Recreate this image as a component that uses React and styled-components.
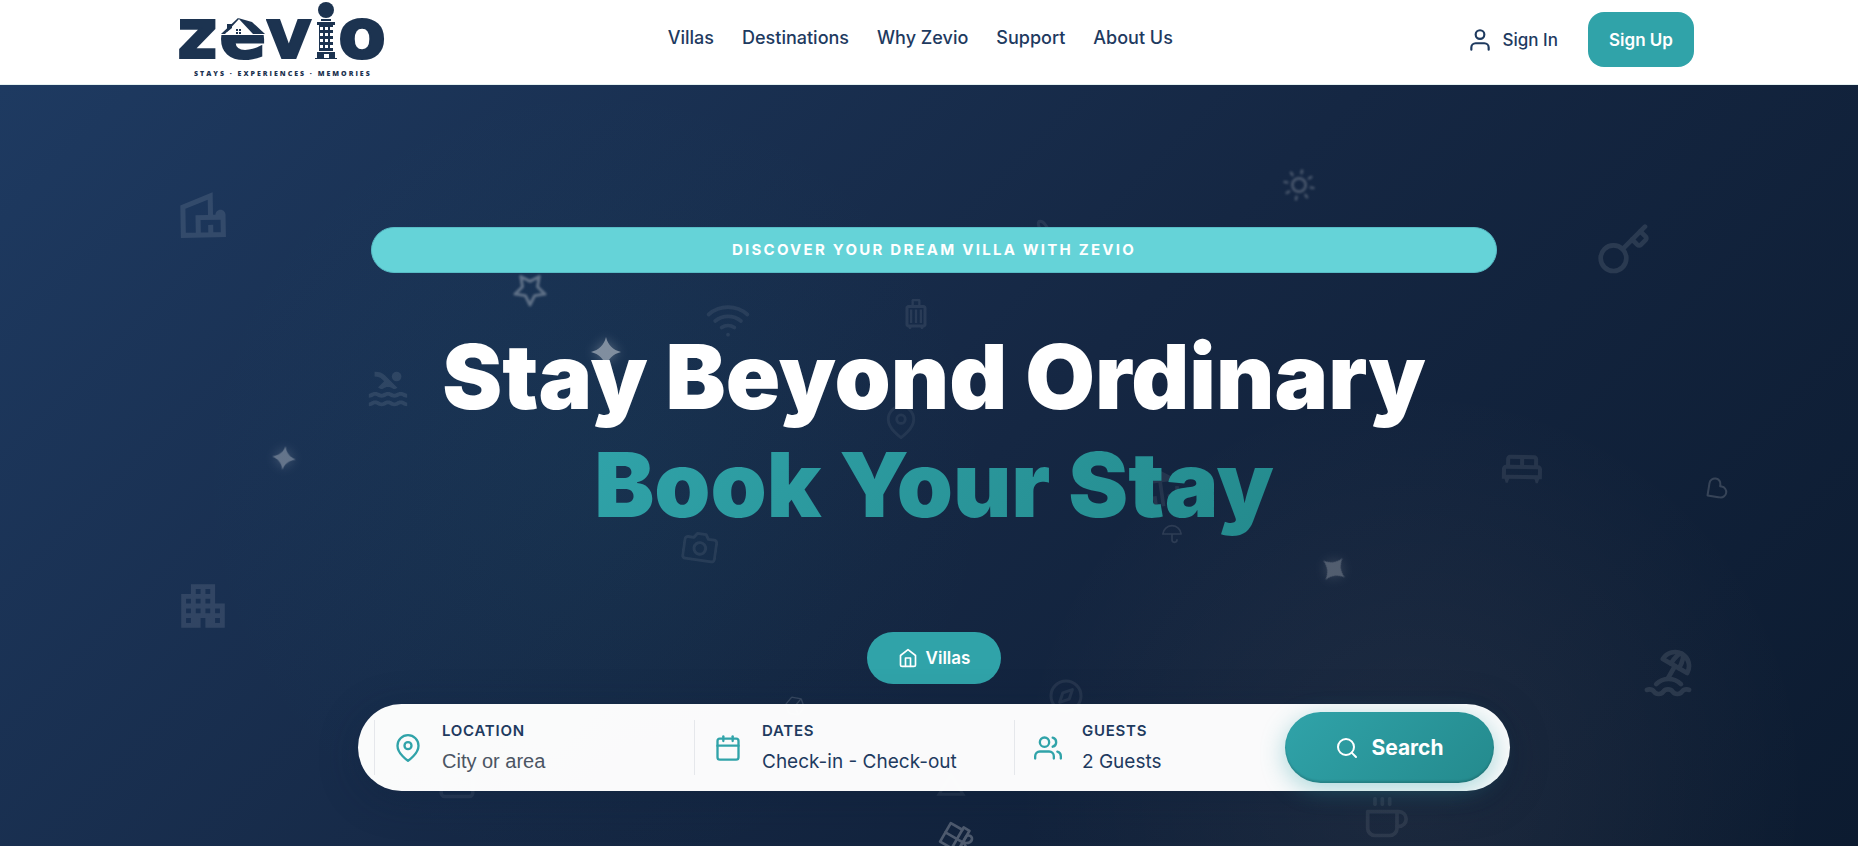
import styled, { createGlobalStyle } from "styled-components";
import {
  FiBox,
  FiCalendar,
  FiCamera,
  FiCoffee,
  FiCompass,
  FiGift,
  FiHeart,
  FiHome,
  FiMapPin,
  FiSearch,
  FiStar,
  FiSun,
  FiUmbrella,
  FiUser,
  FiUsers,
  FiWifi,
} from "react-icons/fi";
import {
  MdApartment,
  MdChangeHistory,
  MdDeck,
  MdOutlineKingBed,
  MdOutlineLuggage,
  MdOutlineVilla,
  MdPool,
} from "react-icons/md";
import { TbBeach } from "react-icons/tb";
import { Key, Plane } from "lucide-react";

const COLORS = {
  NAVY: "#1e3a5f",
  LOGO: "#1c3350",
  TEAL: "#30a3a9",
  TEAL_DARK: "#248a8d",
  AQUA: "#65d3d8",
  GREY: "#4b5563",
  WHITE: "#ffffff",
};

const GlobalStyle = createGlobalStyle`
  *, *::before, *::after {
    box-sizing: border-box;
  }
  body {
    margin: 0;
    font-family: Inter, "Liberation Sans", sans-serif;
    color: ${COLORS.NAVY};
  }
  button {
    font-family: inherit;
    cursor: pointer;
  }
`;

const Page = styled.div`
  display: flex;
  flex-direction: column;
  min-height: 100vh;
  overflow: hidden;
`;

const Header = styled.header`
  background: ${COLORS.WHITE};
  border-bottom: 1px solid #e5f1f1;
  padding: 0 24px 5px 34px;
`;

const HeaderInner = styled.div`
  display: flex;
  align-items: center;
  justify-content: space-between;
  max-width: 1520px;
  margin: 0 auto;
`;

const LogoLink = styled.a`
  display: block;
  color: ${COLORS.LOGO};
  svg {
    display: block;
  }
`;

const LogoLetter = styled.text`
  font-family: "DejaVu Sans", sans-serif;
  font-weight: 700;
  font-size: 70px;
  fill: currentColor;
  stroke: currentColor;
  stroke-width: 2px;
`;

const LogoTagline = styled.text`
  font-family: "Open Sans", sans-serif;
  font-weight: 800;
  font-size: 7px;
  letter-spacing: 2px;
  fill: currentColor;
`;

const Nav = styled.nav`
  display: flex;
  gap: 28px;
  padding-bottom: 4px;
`;

const NavLink = styled.a`
  color: ${COLORS.NAVY};
  font-size: 18px;
  font-weight: 500;
  line-height: 24px;
  text-decoration: none;
`;

const Auth = styled.div`
  display: flex;
  align-items: center;
  gap: 14px;
`;

const SignIn = styled.button`
  display: flex;
  align-items: center;
  gap: 10px;
  padding: 8px 16px 8px 14px;
  border: 0;
  background: none;
  color: ${COLORS.NAVY};
  font-size: 17px;
  font-weight: 500;
`;

const SignUp = styled.button`
  min-width: 106px;
  height: 55px;
  padding: 0 20px;
  border: 0;
  border-radius: 16px;
  background: ${COLORS.TEAL};
  color: ${COLORS.WHITE};
  font-size: 17px;
  font-weight: 600;
`;

const Hero = styled.main`
  position: relative;
  flex: 1;
  padding: 142px 24px 55px 34px;
  background: radial-gradient(
      circle at 76% 92%,
      rgba(255, 215, 185, 0.06) 0,
      rgba(255, 215, 185, 0) 400px
    ),
    radial-gradient(
      circle at 32% 52%,
      rgba(32, 160, 160, 0.05) 0,
      rgba(32, 160, 160, 0) 400px
    ),
    linear-gradient(135deg, #1e3a61 0%, #152743 52%, #0c1b30 100%);
`;

const Decor = styled.div`
  position: absolute;
  inset: 0;
  overflow: hidden;
  color: ${COLORS.WHITE};
`;

const Floating = styled.span`
  position: absolute;
  left: ${(props) => props.$x}%;
  top: ${(props) => props.$y}px;
  opacity: ${(props) => props.$opacity};
  transform: translate(-50%, -50%) rotate(${(props) => props.$turn || 0}deg);
  filter: ${(props) => (props.$soft ? "blur(1px)" : "none")};
  svg {
    display: block;
  }
`;

const SparkleShape = styled.svg`
  filter: drop-shadow(0 0 6px rgba(255, 255, 255, 0.6));
  overflow: visible;
`;

const HeroInner = styled.div`
  position: relative;
  display: flex;
  flex-direction: column;
  align-items: center;
  max-width: 1152px;
  margin: 0 auto;
`;

const Tagline = styled.p`
  align-self: stretch;
  margin: 0 13px;
  padding: 12px 24px;
  border: 1px solid #58bcc6;
  border-radius: 23px;
  background: ${COLORS.AQUA};
  color: ${COLORS.WHITE};
  font-size: 15px;
  font-weight: 700;
  letter-spacing: 0.15em;
  line-height: 20px;
  text-align: center;
  text-transform: uppercase;
`;

const Title = styled.h1`
  margin: 50px 0 0;
  color: ${COLORS.WHITE};
  font-size: 90px;
  font-weight: 900;
  line-height: 108px;
  text-align: center;
`;

const TitleAccent = styled.span`
  display: block;
  width: fit-content;
  margin: 0 auto;
  background: linear-gradient(135deg, ${COLORS.TEAL}, ${COLORS.TEAL_DARK});
  background-clip: text;
  color: transparent;
`;

const Category = styled.button`
  display: flex;
  align-items: center;
  gap: 8px;
  height: 52px;
  margin: 93px 0 20px;
  padding: 0 31px;
  border: 0;
  border-radius: 26px;
  background: ${COLORS.TEAL};
  color: ${COLORS.WHITE};
  font-size: 17px;
  font-weight: 600;
`;

const SearchBar = styled.form`
  display: flex;
  align-items: center;
  align-self: stretch;
  padding: 8px 16px;
  border-radius: 44px;
  background: rgba(255, 255, 255, 0.98);
  box-shadow: 0 8px 40px rgba(14, 30, 56, 0.3);
`;

const Field = styled.div`
  display: flex;
  align-items: center;
  gap: 20px;
  flex: ${(props) => (props.$fill ? "1 1 0" : "0 1 320px")};
  min-width: 0;
  height: 55px;
  padding: 0 19px;
  border-left: 1px solid #e5e7eb;
  color: ${COLORS.TEAL};
  svg {
    flex: none;
  }
`;

const FieldText = styled.div`
  display: flex;
  flex-direction: column;
  gap: 6px;
  flex: 1;
  min-width: 0;
`;

const FieldLabel = styled.label`
  color: ${COLORS.NAVY};
  font-size: 15px;
  font-weight: 600;
  letter-spacing: 0.05em;
  line-height: 22px;
  text-transform: uppercase;
`;

const FieldInput = styled.input`
  width: 100%;
  height: 28px;
  padding: 0;
  border: 0;
  outline: 0;
  background: none;
  color: ${COLORS.NAVY};
  font-family: "Liberation Sans", sans-serif;
  font-size: 20px;
  &::placeholder {
    color: ${COLORS.GREY};
    opacity: 1;
  }
`;

const FieldButton = styled.button`
  height: 28px;
  padding: 0;
  border: 0;
  background: none;
  color: ${COLORS.NAVY};
  font-size: 19px;
  line-height: 28px;
  text-align: left;
  white-space: nowrap;
`;

const SearchButton = styled.button`
  display: flex;
  align-items: center;
  justify-content: center;
  gap: 12px;
  width: 209px;
  height: 71px;
  border: 0;
  border-radius: 36px;
  background: linear-gradient(135deg, ${COLORS.TEAL}, ${COLORS.TEAL_DARK});
  box-shadow: 0 6px 24px rgba(48, 163, 169, 0.4),
    inset 0 -2px 2px rgba(0, 0, 0, 0.15);
  color: ${COLORS.WHITE};
  font-size: 21px;
  font-weight: 700;
`;

const Sparkle = ({ size }) => (
  <SparkleShape width={size} height={size} viewBox="0 0 24 24" fill="currentColor">
    <path d="M12 0C13.600 6.500 17.500 10.400 24 12C17.500 13.600 13.600 17.500 12 24C10.400 17.500 6.500 13.600 0 12C6.500 10.400 10.400 6.500 12 0Z" />
  </SparkleShape>
);

const DECORATIONS = [
  { icon: <MdOutlineVilla size={60} />, x: 10.9, y: 130, turn: -1, opacity: 0.1 },
  { icon: <MdApartment size={58} />, x: 10.9, y: 521, opacity: 0.1 },
  { icon: <MdPool size={46} />, x: 20.9, y: 304, opacity: 0.09 },
  { icon: <Key size={56} />, x: 87.4, y: 165, opacity: 0.1 },
  { icon: <TbBeach size={56} />, x: 89.8, y: 588, opacity: 0.1 },
  { icon: <MdOutlineKingBed size={48} />, x: 81.9, y: 384, turn: 1, opacity: 0.08 },
  { icon: <FiStar size={36} />, x: 28.5, y: 205, turn: 180, opacity: 0.3, soft: true },
  { icon: <FiSun size={32} />, x: 69.9, y: 100, turn: 12, opacity: 0.22, soft: true },
  { icon: <FiWifi size={44} />, x: 39.2, y: 235, opacity: 0.07 },
  { icon: <MdOutlineLuggage size={36} />, x: 49.3, y: 229, opacity: 0.08 },
  { icon: <FiMapPin size={34} />, x: 48.5, y: 337, opacity: 0.06 },
  { icon: <FiCamera size={35} />, x: 37.7, y: 462, turn: 8, opacity: 0.07 },
  { icon: <Plane size={36} />, x: 56.5, y: 152, turn: -80, opacity: 0.07 },
  { icon: <MdDeck size={44} />, x: 62.5, y: 403, turn: -8, opacity: 0.07 },
  { icon: <FiUmbrella size={20} />, x: 63.1, y: 449, opacity: 0.1 },
  { icon: <FiHeart size={24} />, x: 92.3, y: 405, turn: 54, opacity: 0.16 },
  { icon: <FiCompass size={36} />, x: 57.4, y: 611, opacity: 0.07 },
  { icon: <FiBox size={22} strokeWidth={1.5} />, x: 42.8, y: 621, turn: -20, opacity: 0.15 },
  { icon: <FiCoffee size={44} />, x: 74.6, y: 734, opacity: 0.08 },
  { icon: <FiCalendar size={42} />, x: 24.6, y: 694, opacity: 0.07 },
  { icon: <MdChangeHistory size={35} />, x: 51.2, y: 699, opacity: 0.07 },
  { icon: <FiGift size={32} />, x: 51.5, y: 754, turn: 120, opacity: 0.25 },
  { icon: <Sparkle size={24} />, x: 15.3, y: 373, turn: 8, opacity: 0.32 },
  { icon: <Sparkle size={30} />, x: 32.6, y: 267, opacity: 0.45 },
  { icon: <Sparkle size={28} />, x: 71.8, y: 484, turn: 38, opacity: 0.25 },
];

const NAV_LINKS = ["Villas", "Destinations", "Why Zevio", "Support", "About Us"];

const WINDOW_ROWS = [27, 33, 39, 45];
const WINDOW_COLS = [148, 153, 158];

const Logo = () => (
  <LogoLink href="#home" aria-label="Zevio">
    <svg width="214" height="79" viewBox="0 0 214 79" fill="currentColor">
      <LogoLetter x="3" y="58">z</LogoLetter>
      <LogoLetter x="45" y="58">e</LogoLetter>
      <LogoLetter x="92" y="58">v</LogoLetter>
      <LogoLetter x="164" y="58">o</LogoLetter>
      {/* house resting on the e */}
      <path d="M46 34V17H92V34Z" fill="#fff" />
      <path d="M53 24h5v4l-5 4z" />
      <path d="M65 19 51 34h-4L64 18z" />
      <path d="M64 18l14 4 13 12H79z" />
      <path d="M62 29h2v2h-2zM65 29h2v2h-2zM62 32h2v2h-2zM65 32h2v2h-2z" />
      <path d="M46 34.500h45" stroke="#fff" />
      {/* tower standing in for the i */}
      <circle cx="152" cy="10" r="8" />
      <path d="M147 19h10v2h-10zM143 22h18v3h-18zM145 25h14v26h-14zM143 52h18v6h-18zM141 58h22v1h-22z" />
      <g fill="#fff">
        {WINDOW_ROWS.map((y) =>
          WINDOW_COLS.map((x) => (
            <rect key={`${x}-${y}`} x={x - 2} y={y} width="3" height="3" />
          ))
        )}
        <path d="M150 54h5v4h-5z" />
      </g>
      <LogoTagline x="20" y="76">STAYS · EXPERIENCES · MEMORIES</LogoTagline>
    </svg>
  </LogoLink>
);

const App = () => (
  <>
    <GlobalStyle />
    <Page>
      <Header>
        <HeaderInner>
          <Logo />
          <Nav>
            {NAV_LINKS.map((link) => (
              <NavLink key={link} href="#">
                {link}
              </NavLink>
            ))}
          </Nav>
          <Auth>
            <SignIn type="button">
              <FiUser size={26} />
              Sign In
            </SignIn>
            <SignUp type="button">Sign Up</SignUp>
          </Auth>
        </HeaderInner>
      </Header>
      <Hero>
        <Decor aria-hidden="true">
          {DECORATIONS.map((item, index) => (
            <Floating
              key={index}
              $x={item.x}
              $y={item.y}
              $turn={item.turn}
              $opacity={item.opacity}
              $soft={item.soft}
            >
              {item.icon}
            </Floating>
          ))}
        </Decor>
        <HeroInner>
          <Tagline>Discover your dream villa with Zevio</Tagline>
          <Title>
            Stay Beyond Ordinary
            <TitleAccent>Book Your Stay</TitleAccent>
          </Title>
          <Category type="button">
            <FiHome size={20} />
            Villas
          </Category>
          <SearchBar onSubmit={(event) => event.preventDefault()}>
            <Field>
              <FiMapPin size={28} />
              <FieldText>
                <FieldLabel htmlFor="location">Location</FieldLabel>
                <FieldInput id="location" placeholder="City or area" />
              </FieldText>
            </Field>
            <Field>
              <FiCalendar size={28} />
              <FieldText>
                <FieldLabel htmlFor="dates">Dates</FieldLabel>
                <FieldButton id="dates" type="button">
                  Check-in - Check-out
                </FieldButton>
              </FieldText>
            </Field>
            <Field $fill>
              <FiUsers size={28} />
              <FieldText>
                <FieldLabel htmlFor="guests">Guests</FieldLabel>
                <FieldButton id="guests" type="button">
                  2 Guests
                </FieldButton>
              </FieldText>
            </Field>
            <SearchButton type="submit">
              <FiSearch size={24} />
              Search
            </SearchButton>
          </SearchBar>
        </HeroInner>
      </Hero>
    </Page>
  </>
);

export default App;
